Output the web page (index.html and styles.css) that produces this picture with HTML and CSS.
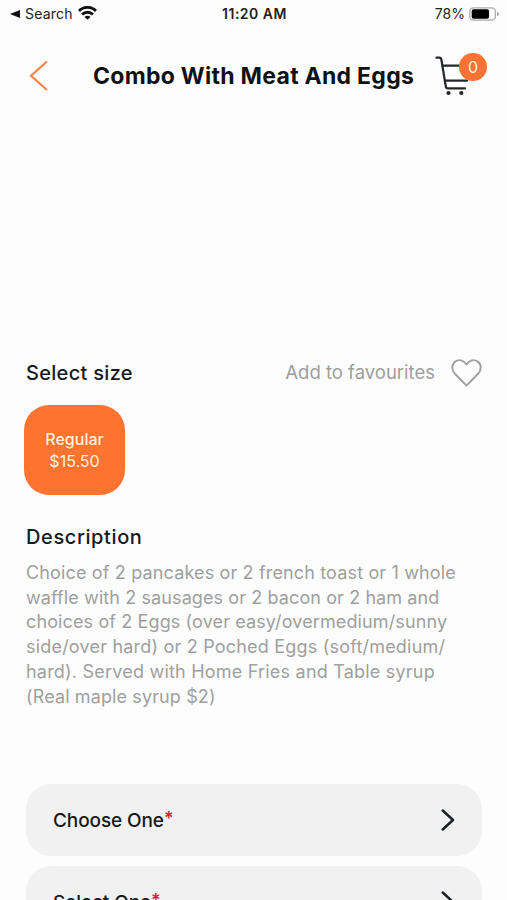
FILE: index.html
```
<!DOCTYPE html>
<html lang="en">
<head>
<meta charset="utf-8">
<title>Combo With Meat And Eggs</title>
<link rel="stylesheet" href="styles.css">
</head>
<body>
<div class="screen">
  <div class="status">
    <div class="status-left">
      <svg width="10" height="8" viewBox="0 0 10 8"><path d="M0 4 10 0V8Z" fill="#111"/></svg>
      <span class="back-app">Search</span>
      <svg class="wifi" width="19" height="14" viewBox="0 0 19 14" fill="none" stroke="#111" stroke-width="2.8"><path d="M1 4.900a12 12 0 0 1 17 0M4.100 8.500a7.600 7.600 0 0 1 10.800 0"/><path d="M9.500 13.800 6.500 10.900a4.200 4.200 0 0 1 6 0Z" fill="#111" stroke="none"/></svg>
    </div>
    <span class="time">11:20 AM</span>
    <div class="status-right">
      <span>78%</span>
      <svg width="30" height="14" viewBox="0 0 30 14"><rect x=".8" y=".8" width="25.600" height="12.400" rx="3.800" fill="#fff" stroke="#aaa" stroke-width="1.300"/><rect x="2.700" y="2.200" width="17.300" height="9.600" rx="1.800" fill="#000"/><path d="M28 4.700q2 .6 2 2.300t-2 2.300Z" fill="#aaa"/></svg>
    </div>
  </div>

  <header class="header">
    <svg class="back" width="20" height="32" viewBox="0 0 20 32" fill="none" stroke="#f58345" stroke-width="2.200"><path d="M18 1.500 2 15.700 18 30"/></svg>
    <h1>Combo With Meat And Eggs</h1>
    <div class="cart">
      <svg width="36" height="42" viewBox="0 0 36 42" fill="none" stroke="#24262b" stroke-width="2.200" stroke-linecap="round" stroke-linejoin="round"><path d="M1.500 2.700H4.200q1.800 0 2.200 2L10.800 31.500q.3 1.800 2 1.800H30"/><path d="M7.500 10.700H30M10 25.700H32"/><g fill="#24262b" stroke="none"><circle cx="13.500" cy="38" r="2.100"/><circle cx="26.300" cy="38" r="2.100"/></g></svg>
      <span class="badge">0</span>
    </div>
  </header>

  <main class="content">
    <div class="size-head">
      <h2 class="size-title">Select size</h2>
      <div class="favourite">
        <span>Add to favourites</span>
        <svg width="31" height="28" viewBox="0 0 32 29" fill="none" stroke="#a0a0a0" stroke-width="2" stroke-linejoin="round"><path d="M16 27.500 4.300 15.500C-.2 10.800.7 5.200 4.300 2.700 8-.1 12.800 1 16 5.700 19.200 1 24-.1 27.700 2.700 31.300 5.200 32.200 10.800 27.700 15.500Z"/></svg>
      </div>
    </div>
    <button class="size"><span class="size-name">Regular</span><span class="size-price">$15.50</span></button>
    <h2 class="desc-title">Description</h2>
    <p class="desc">
      <span class="l1">Choice of 2 pancakes or 2 french toast or 1 whole</span>
      <span class="l2">waffle with 2 sausages or 2 bacon or 2 ham and</span>
      <span class="l3">choices of 2 Eggs (over easy/overmedium/sunny</span>
      <span class="l4">side/over hard) or 2 Poched Eggs (soft/medium/</span>
      <span class="l5">hard). Served with Home Fries and Table syrup</span>
      <span class="l6">(Real maple syrup $2)</span>
    </p>
    <div class="options">
      <div class="option"><span>Choose One<b>*</b></span><svg width="14" height="22" viewBox="0 0 14 22"><path d="M1.700 1.500 12 11 1.700 20.500"/></svg></div>
      <div class="option"><span>Select One<b>*</b></span><svg width="14" height="22" viewBox="0 0 14 22"><path d="M1.700 1.500 12 11 1.700 20.500"/></svg></div>
    </div>
  </main>
</div>
</body>
</html>
```
FILE: styles.css
```
* { box-sizing: border-box; }
body { margin: 0; background: #fdfdfd; font-family: Inter, "Liberation Sans", sans-serif; color: #16191d; }
h1, h2, p { margin: 0; }
svg { display: block; flex: none; }
.screen { height: 900px; overflow: hidden; }

.status { height: 27px; display: grid; grid-template-columns: 1fr auto 1fr; align-items: center; padding: 0 8px 0 10px; font-size: 14px; line-height: 20px; color: #222; }
.status-left { display: flex; align-items: center; gap: 5px; }
.back-app { letter-spacing: .2px; }
.wifi { margin-top: -2px; }
.time { font-weight: 600; letter-spacing: .5px; }
.status-right { display: flex; align-items: center; justify-content: flex-end; gap: 4px; }

.header { height: 98px; display: flex; align-items: flex-start; padding: 28px 0 0 29px; }
.back { margin-top: 5px; }
.header h1 { margin: 4px 0 0 44px; width: 342px; font-size: 23px; line-height: 34px; font-weight: 700; letter-spacing: .28px; white-space: nowrap; color: #0e1216; }
.cart { position: relative; width: 52px; height: 42px; }
.badge { position: absolute; left: 24px; top: -2px; width: 28px; height: 28px; border-radius: 50%; background: #fb7232; color: #fff0df; font-size: 16px; line-height: 29px; text-align: center; }

.content { padding: 233px 25px 0 26px; }
.size-head { height: 29px; display: flex; align-items: center; justify-content: space-between; }
.size-title, .desc-title { font-size: 20px; line-height: 28px; font-weight: 500; letter-spacing: .3px; }
.size-title { padding-top: 1px; }
.favourite { display: flex; align-items: center; gap: 16px; font-size: 18.500px; color: #9d9d9d; }
.favourite span { padding-bottom: 2px; }
.size { display: flex; flex-direction: column; align-items: center; justify-content: center; width: 101px; height: 90px; margin: 18px 0 0 -2px; padding: 0; border: 0; border-radius: 25px; background: #fd7330; color: #fff0df; font: 16px/22px Inter, "Liberation Sans", sans-serif; }
.size-name { font-weight: 500; }
.desc-title { margin-top: 28px; letter-spacing: .6px; }
.desc { margin-top: 10px; font-size: 18px; line-height: 24.700px; color: #9f9f9f; }
.desc span { display: block; white-space: nowrap; }
.l1 { letter-spacing: .15px; }
.l2 { letter-spacing: .1px; }
.l3 { letter-spacing: .12px; }
.l4 { letter-spacing: .2px; }
.l5 { letter-spacing: .21px; }
.l6 { letter-spacing: .12px; }

.options { display: flex; flex-direction: column; gap: 10px; margin-top: 75px; }
.option { height: 72px; border-radius: 25px; background: #f1f1f1; display: flex; align-items: center; justify-content: space-between; padding: 0 27px; font-size: 19px; font-weight: 500; letter-spacing: -.1px; }
.option b { color: #e3202b; font-weight: 600; font-size: 18px; line-height: 1; vertical-align: 2px; }
.option path { fill: none; stroke: #1d2024; stroke-width: 2.500; stroke-linecap: round; stroke-linejoin: round; }
```
